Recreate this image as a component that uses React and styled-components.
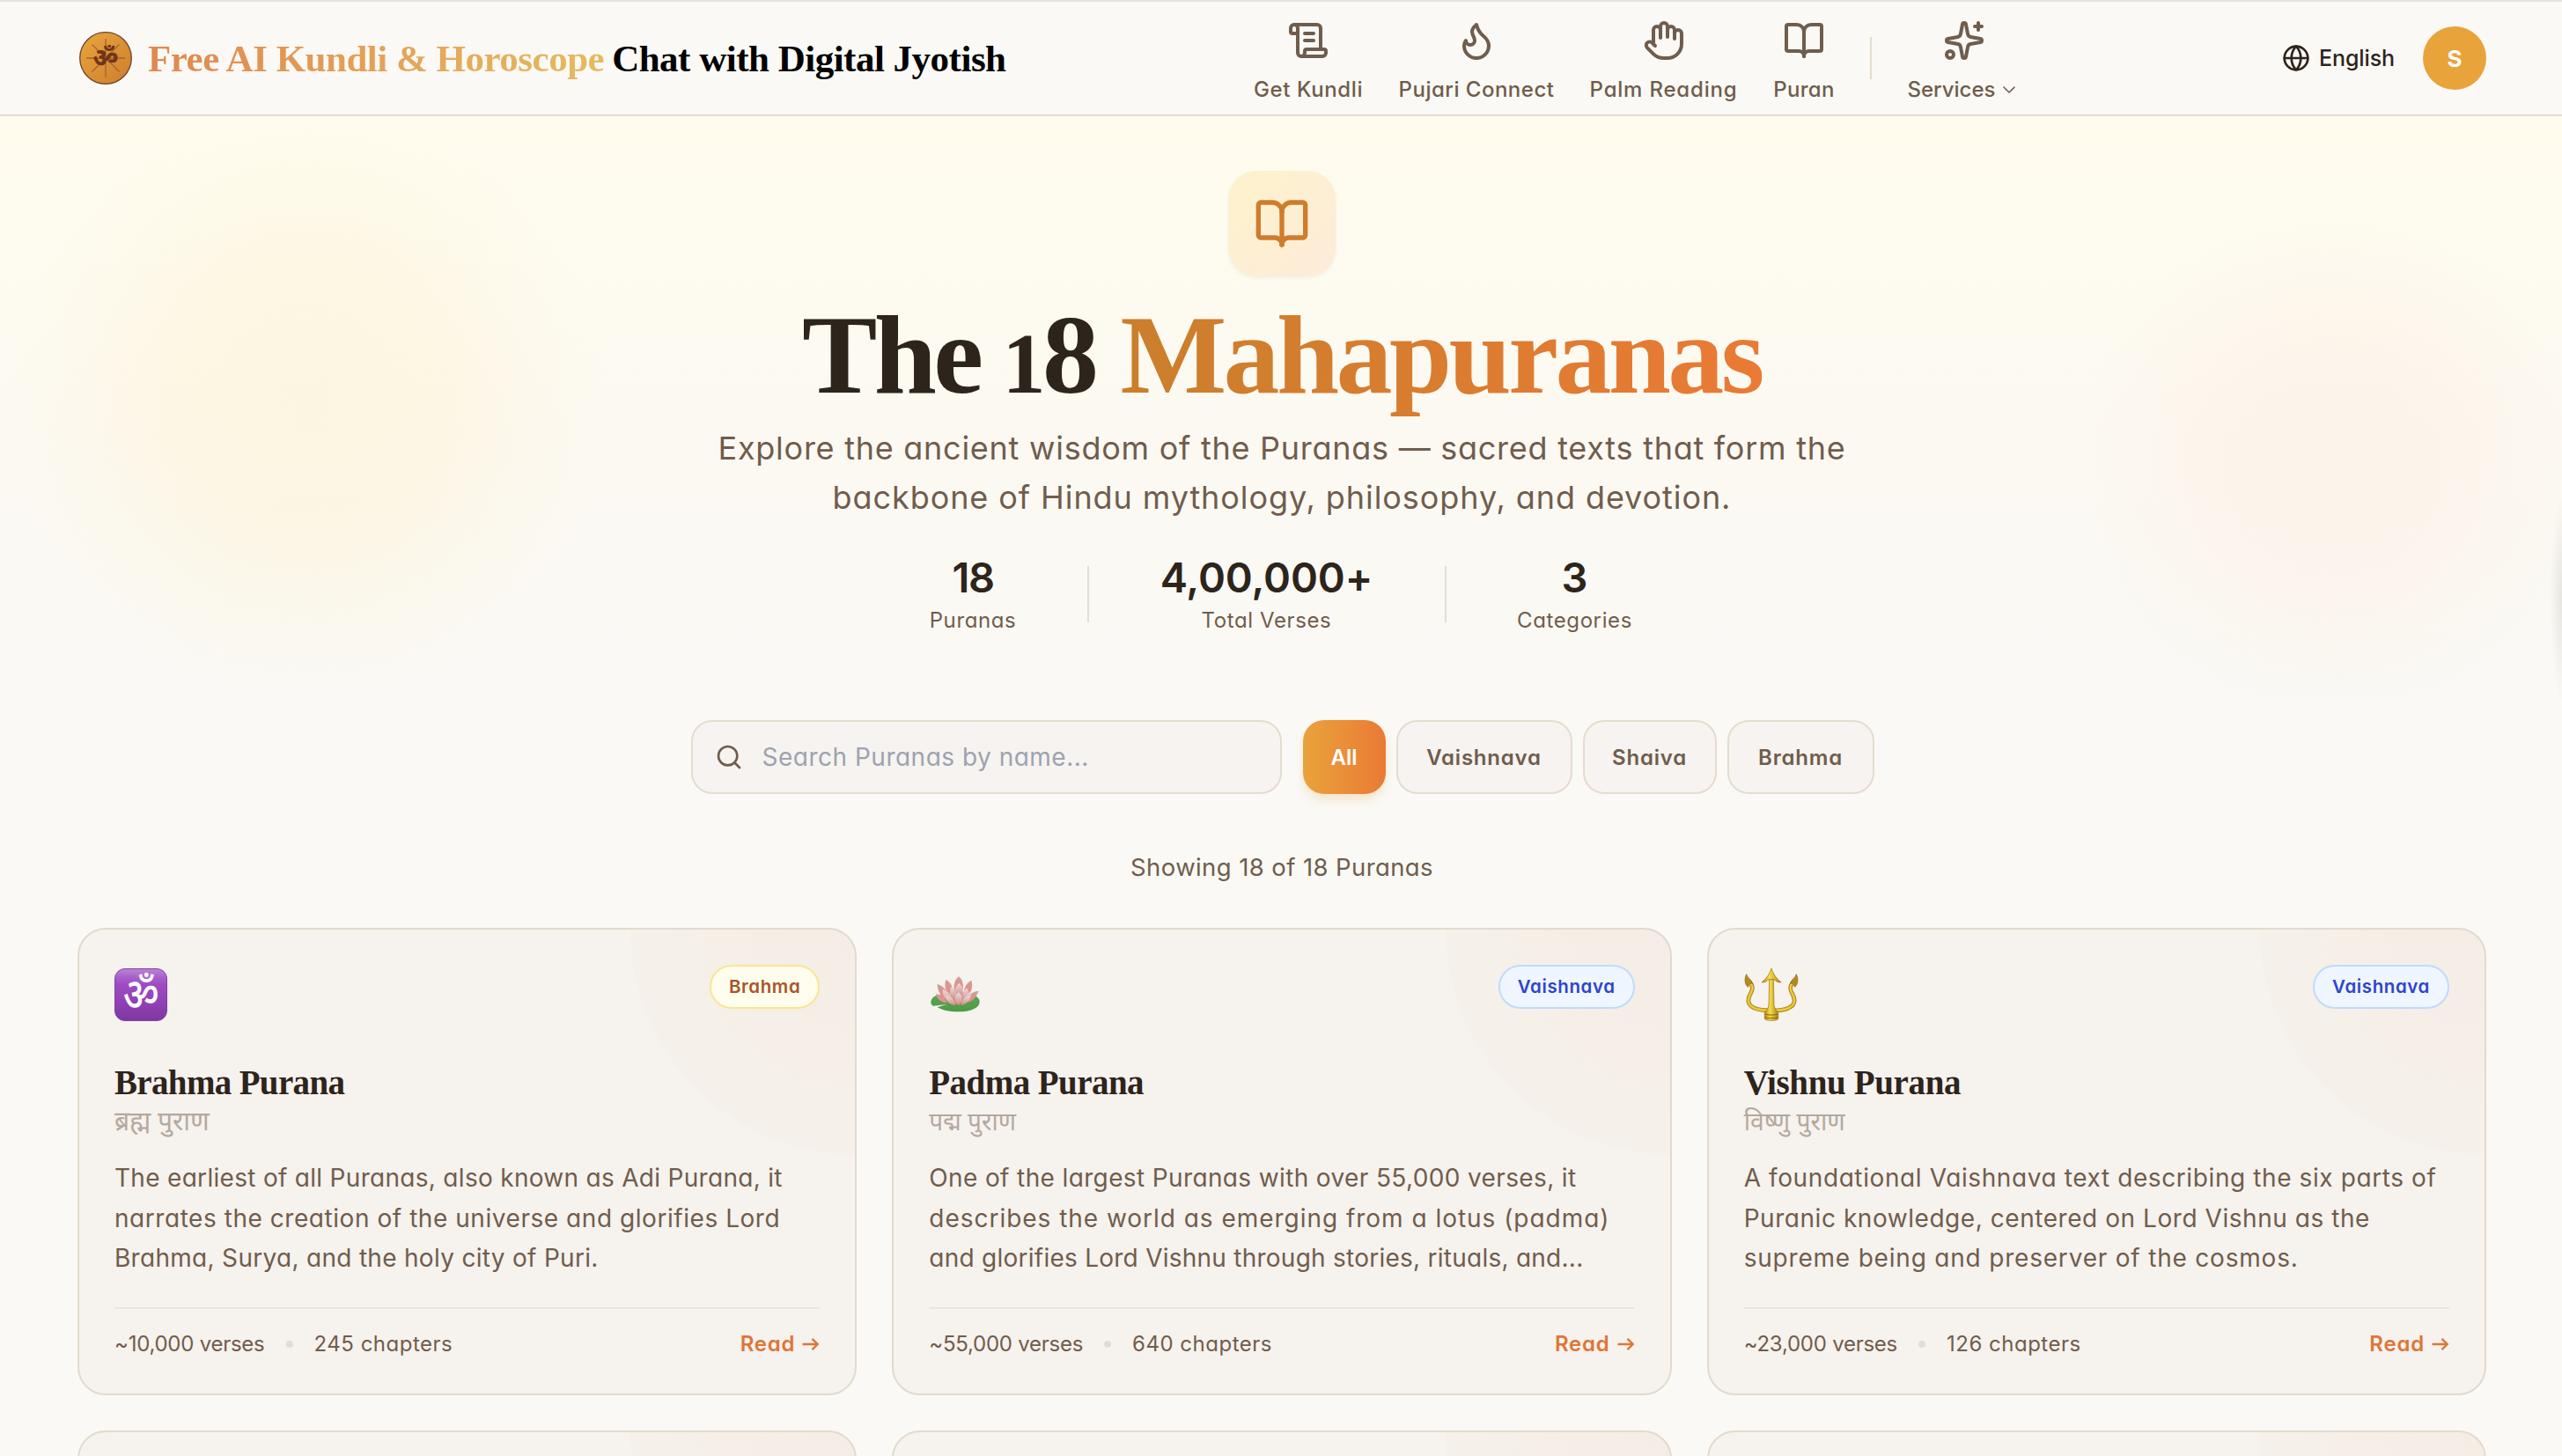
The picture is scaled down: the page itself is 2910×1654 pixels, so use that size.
import React from 'react'
import styled, { createGlobalStyle } from 'styled-components'
import { BookOpen, ChevronDown, Flame, Globe, Hand, ScrollText, Search, Sparkles } from 'lucide-react'

const GlobalStyle = createGlobalStyle`
  * {
    box-sizing: border-box;
  }
  body {
    margin: 0;
    background: #faf9f5;
    color: #2d241c;
    font-family: Inter, 'Noto Sans', sans-serif;
    font-feature-settings: 'cv11';
    overflow: hidden;
  }
`

const serif = "'Liberation Serif', serif"

const Page = styled.div`
  position: relative;
  height: 1654px;
  overflow: hidden;
  padding-bottom: 40px;
`

/* header */

const Header = styled.header`
  display: flex;
  align-items: center;
  height: 132px;
  padding: 0 86px 0 88px;
  background: #faf9f5;
  border-top: 2px solid #e5e4df;
  border-bottom: 2px solid #e6dcd0;
`

const Brand = styled.div`
  display: flex;
  align-items: center;
  flex: none;
  width: 1335px;
`

const BrandName = styled.div`
  display: flex;
  gap: 9px;
  margin-left: 16px;
  padding-top: 1px;
  font-family: ${serif};
  font-weight: 700;
  font-size: 43px;
  line-height: 56px;
  letter-spacing: -0.5px;
  color: #000;
  white-space: nowrap;
`

const BrandAccent = styled.span`
  background: linear-gradient(90deg, #e08850, #e6bb60);
  background-clip: text;
  -webkit-background-clip: text;
  color: transparent;
`

const Nav = styled.nav`
  display: flex;
  align-items: center;
  gap: 40px;
  padding-top: 9px;
`

const NavItem = styled.div`
  display: flex;
  flex-direction: column;
  align-items: center;
  gap: 15px;
  width: ${p => p.$w}px;
  color: #6f5d4d;
`

const NavLabel = styled.div`
  display: flex;
  align-items: center;
  gap: 4px;
  font-size: 24px;
  font-weight: 500;
  line-height: 34px;
  letter-spacing: ${p => p.$ls}px;
  white-space: nowrap;
`

const NavDivider = styled.div`
  width: 2px;
  height: 48px;
  margin-top: -9px;
  background: #e5dccf;
`

const Account = styled.div`
  display: flex;
  align-items: center;
  margin-left: auto;
`

const Language = styled.div`
  display: flex;
  align-items: center;
  gap: 10px;
  margin-right: 32px;
  font-size: 25px;
  font-weight: 500;
  letter-spacing: -0.1px;
`

const Avatar = styled.div`
  display: flex;
  align-items: center;
  justify-content: center;
  width: 72px;
  height: 72px;
  border-radius: 50%;
  background: #e9a33b;
  color: #fff;
  font-size: 26px;
  font-weight: 700;
`

/* hero */

const Hero = styled.section`
  display: flex;
  flex-direction: column;
  align-items: center;
  padding: 62px 86px 0 88px;
  height: 658px;
  background:
    radial-gradient(circle 340px at 350px 330px, #fcf0c866, #fcf0c852 45%, #fcf0c820 75%, transparent),
    radial-gradient(circle 290px at 2650px 400px, #fce8da59, #fce8da40 50%, #fce8da18 80%, transparent),
    linear-gradient(#fffcee, #fcf9f2 55%, #faf9f5);
`

const HeroIcon = styled.div`
  display: flex;
  align-items: center;
  justify-content: center;
  width: 122px;
  height: 120px;
  border-radius: 32px;
  background: linear-gradient(135deg, #fdf3cc, #fdebd9);
  box-shadow: 0 2px 4px #0000000d;
  color: #cf7c2c;
`

const Title = styled.h1`
  display: flex;
  align-items: baseline;
  margin: 19px 0 0;
  height: 140px;
  font-family: ${serif};
  font-size: 128px;
  line-height: 140px;
  font-weight: 700;
  letter-spacing: -3.6px;
  white-space: nowrap;
`

const TitleNumber = styled.span`
  margin: 0 28px 0 25px;
`

const OldStyleOne = styled.span`
  font-size: 98px;
  line-height: 1;
`

const TitleAccent = styled.span`
  background: linear-gradient(90deg, #ca7f2b, #ea7a35);
  background-clip: text;
  -webkit-background-clip: text;
  color: transparent;
`

const Lead = styled.p`
  margin: 8px 0 0;
  font-size: 36px;
  line-height: 56px;
  color: #6f5d4d;
  text-align: center;
  white-space: nowrap;
`

const Line = styled.span`
  display: block;
  letter-spacing: ${p => p.$ls}px;
`

const Stats = styled.div`
  display: flex;
  align-items: center;
  gap: 80px;
  margin-top: 35px;
  margin-right: 2px;
`

const Stat = styled.div`
  display: flex;
  flex-direction: column;
  align-items: center;
  width: ${p => p.$w}px;
  white-space: nowrap;
`

const StatValue = styled.div`
  font-size: 47px;
  font-weight: 600;
  line-height: 56px;
  letter-spacing: ${p => p.$ls}px;
`

const StatLabel = styled.div`
  margin-top: 5px;
  font-size: 24px;
  line-height: 32px;
  letter-spacing: 0.6px;
  color: #6f5d4d;
`

const StatDivider = styled.div`
  width: 2px;
  height: 64px;
  background: #e8ddd3;
`

/* search and filters */

const Toolbar = styled.div`
  display: flex;
  justify-content: center;
  gap: 12px;
  margin-top: 28px;
  padding-left: 3px;
`

const SearchBox = styled.div`
  display: flex;
  align-items: center;
  gap: 22px;
  width: 671px;
  height: 84px;
  margin-right: 12px;
  padding-left: 25px;
  border: 2px solid #e5dccf;
  border-radius: 24px;
  background: #f7f3f0;
  color: #6f5d4d;
`

const Placeholder = styled.span`
  font-size: 28px;
  letter-spacing: 0.5px;
  color: #9ca3af;
`

const Filter = styled.div`
  display: flex;
  align-items: center;
  justify-content: center;
  width: ${p => p.$w}px;
  height: 84px;
  border: 2px solid #e5dccf;
  border-radius: 24px;
  background: #f7f3f0;
  color: #6f5d4d;
  font-size: 24px;
  font-weight: 600;
  letter-spacing: 0.8px;
  ${p => p.$active && `
    border: 0;
    background: linear-gradient(90deg, #e9a33b, #ea7a35);
    box-shadow: 0 8px 12px -2px #e9a33b40;
    color: #fff;
    letter-spacing: 0;
  `}
`

const Count = styled.p`
  margin: 63px 0 49px;
  padding-left: 2px;
  font-size: 27.5px;
  line-height: 40px;
  letter-spacing: 0.4px;
  text-align: center;
  color: #6f5d4d;
`

/* cards */

const Grid = styled.div`
  display: grid;
  grid-template-columns: repeat(3, 1fr);
  grid-auto-rows: 531px;
  gap: 40px;
  padding: 0 86px 0 88px;
`

const Card = styled.article`
  padding: 40px;
  border: 2px solid #e3dace;
  border-radius: 32px;
  background:
    radial-gradient(circle 256px at 100% 0, #f5ede5 0, #f5efe8 60%, #f5f1ea 99.4%, transparent 100%),
    #f6f2ee;
`

const CardHead = styled.div`
  display: flex;
  justify-content: space-between;
  align-items: flex-start;
  height: 112px;
`

const Symbol = styled.svg`
  width: 60px;
  height: 60px;
  margin-top: 4px;
  overflow: visible;
`

const badgeColors = {
  Brahma: ['#fffdee', '#f9e68f', '#a8562a'],
  Vaishnava: ['#f0f6ff', '#bfdbfe', '#2e45cb'],
}

const Badge = styled.div`
  padding: 0 20px;
  height: 50px;
  border: 2px solid ${p => badgeColors[p.$kind][1]};
  border-radius: 25px;
  background: ${p => badgeColors[p.$kind][0]};
  color: ${p => badgeColors[p.$kind][2]};
  font-size: 20.5px;
  font-weight: 600;
  line-height: 46px;
  letter-spacing: 0.6px;
`

const CardTitle = styled.h3`
  margin: 0;
  font-family: ${serif};
  font-size: 39px;
  font-weight: 700;
  line-height: 44px;
  letter-spacing: ${p => p.$ls}px;
`

const Hindi = styled.div`
  margin-top: 3px;
  font-family: 'Noto Sans', sans-serif;
  font-size: ${p => p.$size}px;
  line-height: 36px;
  height: 36px;
  color: #b3a99f;
`

const Description = styled.p`
  margin: 25px 0 32px;
  font-size: 28px;
  line-height: 45.5px;
  color: #6f5d4d;
  white-space: nowrap;
`

const CardFoot = styled.div`
  display: flex;
  align-items: center;
  gap: 24px;
  padding-top: 24px;
  border-top: 2px solid #ebe6df;
  font-size: 24px;
  line-height: 32px;
  color: #6f5d4d;
  white-space: nowrap;
`

const Verses = styled.span`
  letter-spacing: -0.25px;
`

const Chapters = styled.span`
  letter-spacing: 0.5px;
`

const Dot = styled.span`
  width: 8px;
  height: 8px;
  border-radius: 50%;
  background: #e5dccf;
`

const Read = styled.span`
  display: flex;
  align-items: center;
  gap: 8px;
  margin-left: auto;
  font-weight: 600;
  letter-spacing: 0.8px;
  color: #dd7638;
`

const EdgeShade = styled.div`
  position: absolute;
  top: 560px;
  right: 0;
  width: 14px;
  height: 240px;
  background: radial-gradient(ellipse at right, #00000014, transparent 70%);
`

function Logo() {
  return (
    <svg width="64" height="64" viewBox="0 0 64 64" overflow="visible">
      <defs>
        <linearGradient id="coin" x1="0" y1="0" x2="1" y2="1">
          <stop offset="0" stopColor="#eba63e" />
          <stop offset="1" stopColor="#cc7d2c" />
        </linearGradient>
      </defs>
      <circle cx="32" cy="32" r="29.3" fill="url(#coin)" stroke="#6d4327" strokeWidth="1.3" />
      <path
        d="M32 10v44M10 32h44M16.5 16.5l31 31M47.5 16.5l-31 31"
        stroke="#a5642b"
        strokeWidth="1.3"
      />
      <text x="32" y="41" textAnchor="middle" fontFamily="Noto Sans" fontWeight="800" fontSize="28" fill="#703619">ॐ</text>
    </svg>
  )
}

function OmSymbol() {
  return (
    <Symbol viewBox="60 60 180 180">
      <defs>
        <linearGradient id="om" x1="0" y1="0" x2="0" y2="1">
          <stop offset="0" stopColor="#bb84d6" />
          <stop offset="0.16" stopColor="#a762cb" />
          <stop offset="0.3" stopColor="#a04bc4" />
          <stop offset="1" stopColor="#7f37a3" />
        </linearGradient>
      </defs>
      <rect x="61.5" y="61.5" width="177" height="177" rx="34" fill="url(#om)" stroke="#81439f" strokeWidth="3" />
      <g transform="translate(151 203) scale(1 1.2)">
        <text textAnchor="middle" fontFamily="Noto Sans" fontWeight="500" fontSize="130" fill="#fff">ॐ</text>
      </g>
    </Symbol>
  )
}

function LotusSymbol() {
  return (
    <Symbol viewBox="45 60 180 180">
      <defs>
        <linearGradient id="leaf" x1="0" y1="0" x2="0" y2="1">
          <stop offset="0" stopColor="#5da35a" />
          <stop offset="1" stopColor="#4c9a41" />
        </linearGradient>
        <linearGradient id="back" x1="0" y1="0" x2="0" y2="1">
          <stop offset="0" stopColor="#c9a09c" />
          <stop offset="1" stopColor="#f08a80" />
        </linearGradient>
        <linearGradient id="front" x1="0" y1="0" x2="0" y2="1">
          <stop offset="0" stopColor="#efdcda" />
          <stop offset="1" stopColor="#c98e8c" />
        </linearGradient>
      </defs>
      <path d="M52 176c0-15 14-25 34-25h104c18 2 29 12 28 25-2 20-32 32-72 32-32 0-56-6-72-15l32-10-46 5c-5-3-8-7-8-12z" fill="url(#leaf)" />
      <g fill="url(#back)">
        <path d="M147 88c14 12 18 30 12 52h-26c-6-22 0-40 14-52z" />
        <path d="M103 99c16 8 25 24 26 46l-18 6c-11-18-13-36-8-52z" />
        <path d="M190 101c-16 8-25 24-26 44l16 8c12-16 15-34 10-52z" />
        <path d="M74 114c18 5 31 18 37 40l-14 10c-15-14-23-32-23-50z" />
        <path d="M214 138c-16 0-28 8-36 24l2 14c16-6 27-18 34-38z" />
        <path d="M68 148c14-1 28 8 40 30-20-1-34-11-40-30z" />
      </g>
      <path d="M118 140h62l-10 40h-44z" fill="#f4776c" />
      <g fill="url(#front)">
        <path d="M148 110c13 12 16 28 10 46h-22c-6-18-1-34 12-46z" />
        <path d="M122 122c12 8 18 22 18 38l-14 6c-10-14-12-29-4-44z" />
        <path d="M176 128c-12 6-18 18-19 34l12 6c10-12 13-26 7-40z" />
        <path d="M92 132c20 6 33 22 36 50-22-4-36-24-36-50z" />
        <path d="M190 138c-18 8-29 22-30 43 20-4 31-20 30-43z" />
        <path d="M103 153c18 2 30 13 34 33-20 0-32-12-34-33z" />
        <path d="M186 153c-16 2-28 12-32 32 18-1 30-12 32-32z" />
        <path d="M146 141c16 14 16 30 0 46-16-16-16-32 0-46z" />
      </g>
    </Symbol>
  )
}

function TridentSymbol() {
  const prongs = 'M79 108c14 14 10 26 3 38-8 14-10 26-4 36 10 16 36 22 75 22s65-6 75-22c6-10 4-22-4-36-7-12-11-24 3-38'
  return (
    <Symbol viewBox="60 60 180 180">
      <defs>
        <linearGradient id="gold" x1="0" y1="0" x2="1" y2="0">
          <stop offset="0" stopColor="#b98a12" />
          <stop offset="0.4" stopColor="#f3dc4c" />
          <stop offset="1" stopColor="#b48112" />
        </linearGradient>
      </defs>
      <path d={prongs} fill="none" stroke="#9a6d10" strokeWidth="14" />
      <path d={prongs} fill="none" stroke="#ddb525" strokeWidth="10" />
      <path d={prongs} fill="none" stroke="#f3e05e" strokeWidth="3" />
      <path d="M146 96h14l2 90c2 14 12 20 14 26v20c-2 8-44 8-46 0v-20c2-6 12-12 14-26z" fill="url(#gold)" stroke="#9a6d10" strokeWidth="2" />
      <path d="M131 216c12 4 32 4 44 0M131 227c12 4 32 4 44 0" fill="none" stroke="#8d610e" strokeWidth="3" />
      <path d="M153 60c6 18 16 34 33 48-12 0-18-4-24-10h-18c-6 6-12 10-24 10 17-14 27-30 33-48z" fill="url(#gold)" stroke="#9a6d10" strokeWidth="2" />
      <path d="M68 80c2 12 16 16 21 32-8-2-12 0-16 12-12-12-12-28-5-44z" fill="#b58a1c" stroke="#85600f" strokeWidth="2" />
      <path d="M238 80c-2 12-16 16-21 32 8-2 12 0 16 12 12-12 12-28 5-44z" fill="#b58a1c" stroke="#85600f" strokeWidth="2" />
    </Symbol>
  )
}

function Arrow() {
  return (
    <svg width="20" height="16" viewBox="0 0 20 16" fill="none" stroke="currentColor" strokeWidth="2.4">
      <path d="M0.5 8h17M11.5 1.8L17.7 8l-6.2 6.2" />
    </svg>
  )
}

const nav = [
  { label: 'Get Kundli', icon: ScrollText, w: 126, ls: 0.6 },
  { label: 'Pujari Connect', icon: Flame, w: 176, ls: 0.5 },
  { label: 'Palm Reading', icon: Hand, w: 169, ls: 0.8 },
  { label: 'Puran', icon: BookOpen, w: 70, ls: 0.3 },
]

const filters = [
  { label: 'All', w: 94 },
  { label: 'Vaishnava', w: 200 },
  { label: 'Shaiva', w: 152 },
  { label: 'Brahma', w: 167 },
]

const puranas = [
  {
    name: 'Brahma Purana',
    titleLs: -0.65,
    hindi: 'ब्रह्म पुराण',
    hindiSize: 30,
    kind: 'Brahma',
    symbol: OmSymbol,
    lines: [
      ['The earliest of all Puranas, also known as Adi Purana, it', 0.3],
      ['narrates the creation of the universe and glorifies Lord', 0.55],
      ['Brahma, Surya, and the holy city of Puri.', 0.3],
    ],
    verses: '~10,000 verses',
    chapters: '245 chapters',
  },
  {
    name: 'Padma Purana',
    titleLs: -0.55,
    hindi: 'पद्म पुराण',
    hindiSize: 28,
    kind: 'Vaishnava',
    symbol: LotusSymbol,
    lines: [
      ['One of the largest Puranas with over 55,000 verses, it', 0.37],
      ['describes the world as emerging from a lotus (padma)', 0.97],
      ['and glorifies Lord Vishnu through stories, rituals, and...', 0.25],
    ],
    verses: '~55,000 verses',
    chapters: '640 chapters',
  },
  {
    name: 'Vishnu Purana',
    titleLs: -0.35,
    hindi: 'विष्णु पुराण',
    hindiSize: 28.2,
    kind: 'Vaishnava',
    symbol: TridentSymbol,
    lines: [
      ['A foundational Vaishnava text describing the six parts of', 0.6],
      ['Puranic knowledge, centered on Lord Vishnu as the', 0.55],
      ['supreme being and preserver of the cosmos.', 0.8],
    ],
    verses: '~23,000 verses',
    chapters: '126 chapters',
  },
]

function PuranaCard({ purana }) {
  const Icon = purana.symbol
  return (
    <Card>
      <CardHead>
        <Icon />
        <Badge $kind={purana.kind}>{purana.kind}</Badge>
      </CardHead>
      <CardTitle $ls={purana.titleLs}>{purana.name}</CardTitle>
      <Hindi $size={purana.hindiSize}>{purana.hindi}</Hindi>
      <Description>
        {purana.lines.map(([text, ls]) => (
          <Line key={text} $ls={ls}>{text}</Line>
        ))}
      </Description>
      <CardFoot>
        <Verses>{purana.verses}</Verses>
        <Dot />
        <Chapters>{purana.chapters}</Chapters>
        <Read>Read <Arrow /></Read>
      </CardFoot>
    </Card>
  )
}

export default function App() {
  return (
    <Page>
      <GlobalStyle />
      <Header>
        <Brand>
          <Logo />
          <BrandName>
            <BrandAccent>Free AI Kundli &amp; Horoscope</BrandAccent>
            <span>Chat with Digital Jyotish</span>
          </BrandName>
        </Brand>
        <Nav>
          {nav.map(({ label, icon: Icon, w, ls }) => (
            <NavItem key={label} $w={w}>
              <Icon size={48} />
              <NavLabel $ls={ls}>{label}</NavLabel>
            </NavItem>
          ))}
          <NavDivider />
          <NavItem $w={129}>
            <Sparkles size={48} />
            <NavLabel $ls={0}>Services <ChevronDown size={24} strokeWidth={1.6} /></NavLabel>
          </NavItem>
        </Nav>
        <Account>
          <Language>
            <Globe size={32} />
            English
          </Language>
          <Avatar>S</Avatar>
        </Account>
      </Header>

      <Hero>
        <HeroIcon>
          <BookOpen size={64} />
        </HeroIcon>
        <Title>
          <span>The</span>
          <TitleNumber><OldStyleOne>1</OldStyleOne>8</TitleNumber>
          <TitleAccent>Mahapuranas</TitleAccent>
        </Title>
        <Lead>
          <Line $ls={0.74}>Explore the ancient wisdom of the Puranas — sacred texts that form the</Line>
          <Line $ls={0.92}>backbone of Hindu mythology, philosophy, and devotion.</Line>
        </Lead>
        <Stats>
          <Stat $w={99}>
            <StatValue $ls={-1.6}>18</StatValue>
            <StatLabel>Puranas</StatLabel>
          </Stat>
          <StatDivider />
          <Stat $w={244}>
            <StatValue $ls={-0.1}>4,00,000+</StatValue>
            <StatLabel>Total Verses</StatLabel>
          </Stat>
          <StatDivider />
          <Stat $w={132}>
            <StatValue $ls={0}>3</StatValue>
            <StatLabel>Categories</StatLabel>
          </Stat>
        </Stats>
      </Hero>

      <Toolbar>
        <SearchBox>
          <Search size={32} />
          <Placeholder>Search Puranas by name...</Placeholder>
        </SearchBox>
        {filters.map((f, i) => (
          <Filter key={f.label} $w={f.w} $active={i === 0}>{f.label}</Filter>
        ))}
      </Toolbar>
      <Count>Showing 18 of 18 Puranas</Count>

      <Grid>
        {puranas.map(p => (
          <PuranaCard key={p.name} purana={p} />
        ))}
        <Card />
        <Card />
        <Card />
      </Grid>
      <EdgeShade />
    </Page>
  )
}
